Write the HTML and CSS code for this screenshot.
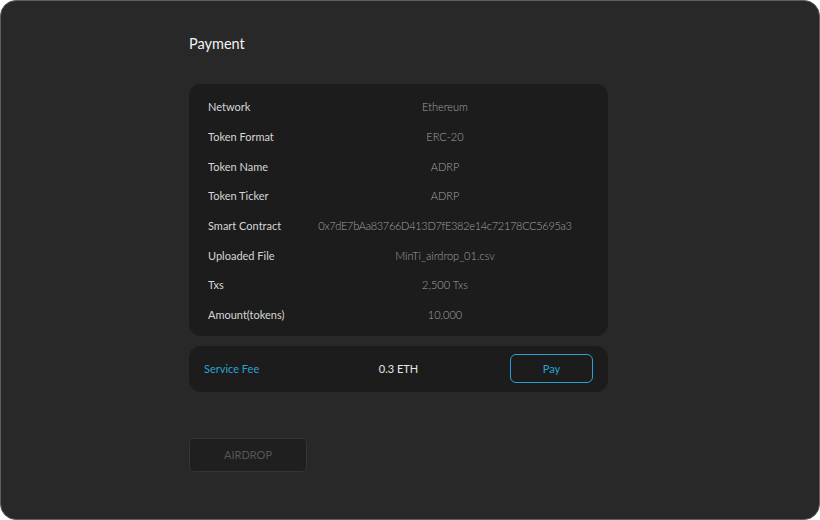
FILE: index.html
```html
<!DOCTYPE html>
<html>
<head>
<meta charset="utf-8">
<link rel="stylesheet" href="styles.css">
</head>
<body>
<div class="frame">
  <div class="content">
    <h1 class="title">Payment</h1>
    <div class="card details">
      <div class="row"><span class="label">Network</span><span class="value">Ethereum</span></div>
      <div class="row"><span class="label">Token Format</span><span class="value">ERC-20</span></div>
      <div class="row"><span class="label">Token Name</span><span class="value">ADRP</span></div>
      <div class="row"><span class="label">Token Ticker</span><span class="value">ADRP</span></div>
      <div class="row"><span class="label">Smart Contract</span><span class="value address">0x7dE7bAa83766D413D7fE382e14c72178CC5695a3</span></div>
      <div class="row"><span class="label">Uploaded File</span><span class="value">MinTi_airdrop_01.csv</span></div>
      <div class="row"><span class="label">Txs</span><span class="value">2,500 Txs</span></div>
      <div class="row"><span class="label">Amount(tokens)</span><span class="value">10,000</span></div>
    </div>
    <div class="card fee">
      <span class="fee-label">Service Fee</span>
      <span class="fee-value">0.3 ETH</span>
      <button class="pay">Pay</button>
    </div>
    <button class="airdrop">AIRDROP</button>
  </div>
</div>
</body>
</html>
```

FILE: styles.css
```css
* { box-sizing: border-box; }
html, body { margin: 0; background: #ffffff; }
body {
  font-family: Lato, "Noto Sans", sans-serif;
}
.frame {
  width: 820px;
  height: 520px;
  background: #282828;
  border: 1px solid #5e5e5e;
  border-radius: 16px;
  padding: 33px 0 0 188px;
}
.content {
  width: 419px;
  display: flex;
  flex-direction: column;
  align-items: flex-start;
}
.title {
  margin: 0;
  font-size: 14.5px;
  line-height: 20px;
  font-weight: 400;
  color: #f2f2f2;
}
.card {
  width: 100%;
  background: #1c1c1c;
  border-radius: 12px;
}
.details {
  margin-top: 30px;
  padding: 8px 19px 6px;
}
.row {
  display: flex;
  align-items: center;
  height: 29.7px;
  font-size: 11px;
}
.label {
  width: 93px;
  flex: none;
  color: #d6d6d6;
  font-weight: 400;
}
.value {
  flex: 1;
  text-align: center;
  color: #a2a2a2;
  font-weight: 300;
  white-space: nowrap;
}
.address { letter-spacing: -0.3px; }
.fee {
  margin-top: 10px;
  height: 46px;
  padding: 0 15px;
  display: grid;
  grid-template-columns: 1fr auto 1fr;
  align-items: center;
  font-size: 11px;
}
.fee-label { color: #2ba2d4; }
.fee-value { color: #e6e6e6; }
.pay {
  justify-self: end;
  width: 83px;
  height: 29px;
  background: transparent;
  border: 1px solid #2ba2d4;
  border-radius: 6px;
  color: #2ba2d4;
  font-family: inherit;
  font-size: 11px;
  padding: 0;
}
.airdrop {
  margin-top: 46px;
  width: 118px;
  height: 34px;
  background: #1f1f1f;
  border: 1px solid #353535;
  border-radius: 5px;
  color: #565656;
  font-family: inherit;
  font-size: 11px;
  padding: 0;
}
```
